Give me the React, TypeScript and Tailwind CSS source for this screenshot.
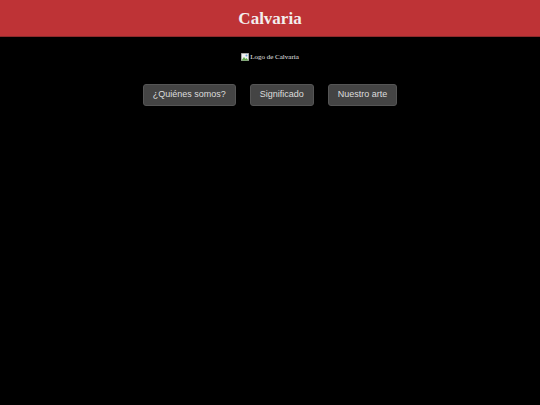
import React from 'react';

const links = ['¿Quiénes somos?', 'Significado', 'Nuestro arte'];

const BrokenImage = () => (
    <svg width="8" height="8" viewBox="0 0 16 16" className="shrink-0">
        <rect x="0.5" y="0.5" width="15" height="15" fill="#f0f0f0" stroke="#9a9a9a" />
        <path d="M1 15 L6 8 L9 12 L11 10 L15 15 Z" fill="#5fa84a" />
        <circle cx="11" cy="5" r="2" fill="#6aa0d8" />
    </svg>
);

export default function App() {
    return (
        <div className="min-h-[405px] w-full bg-black">
            <header className="h-[37px] bg-[#be3336] border-b border-[#8c2a2b] flex items-center justify-center">
                <h1 className="text-[17px] font-bold text-[#f3eeee] font-['Liberation_Serif',serif] leading-none">Calvaria</h1>
            </header>

            <div className="flex justify-center pt-[16px]">
                <div className="flex items-center gap-px text-[7px] text-[#e8e8e8] font-['Liberation_Serif',serif] leading-none">
                    <BrokenImage />
                    <span>Logo de Calvaria</span>
                </div>
            </div>

            {/* navigation */}
            <nav className="flex justify-center gap-[14px] mt-[23px]">
                {links.map(label => (
                    <button
                        key={label}
                        className="h-[22px] px-[9px] rounded-[3px] bg-[#444444] border border-[#555555] text-[9px] text-[#dddddd] font-['Liberation_Sans',sans-serif]"
                    >
                        {label}
                    </button>
                ))}
            </nav>
        </div>
    );
}
